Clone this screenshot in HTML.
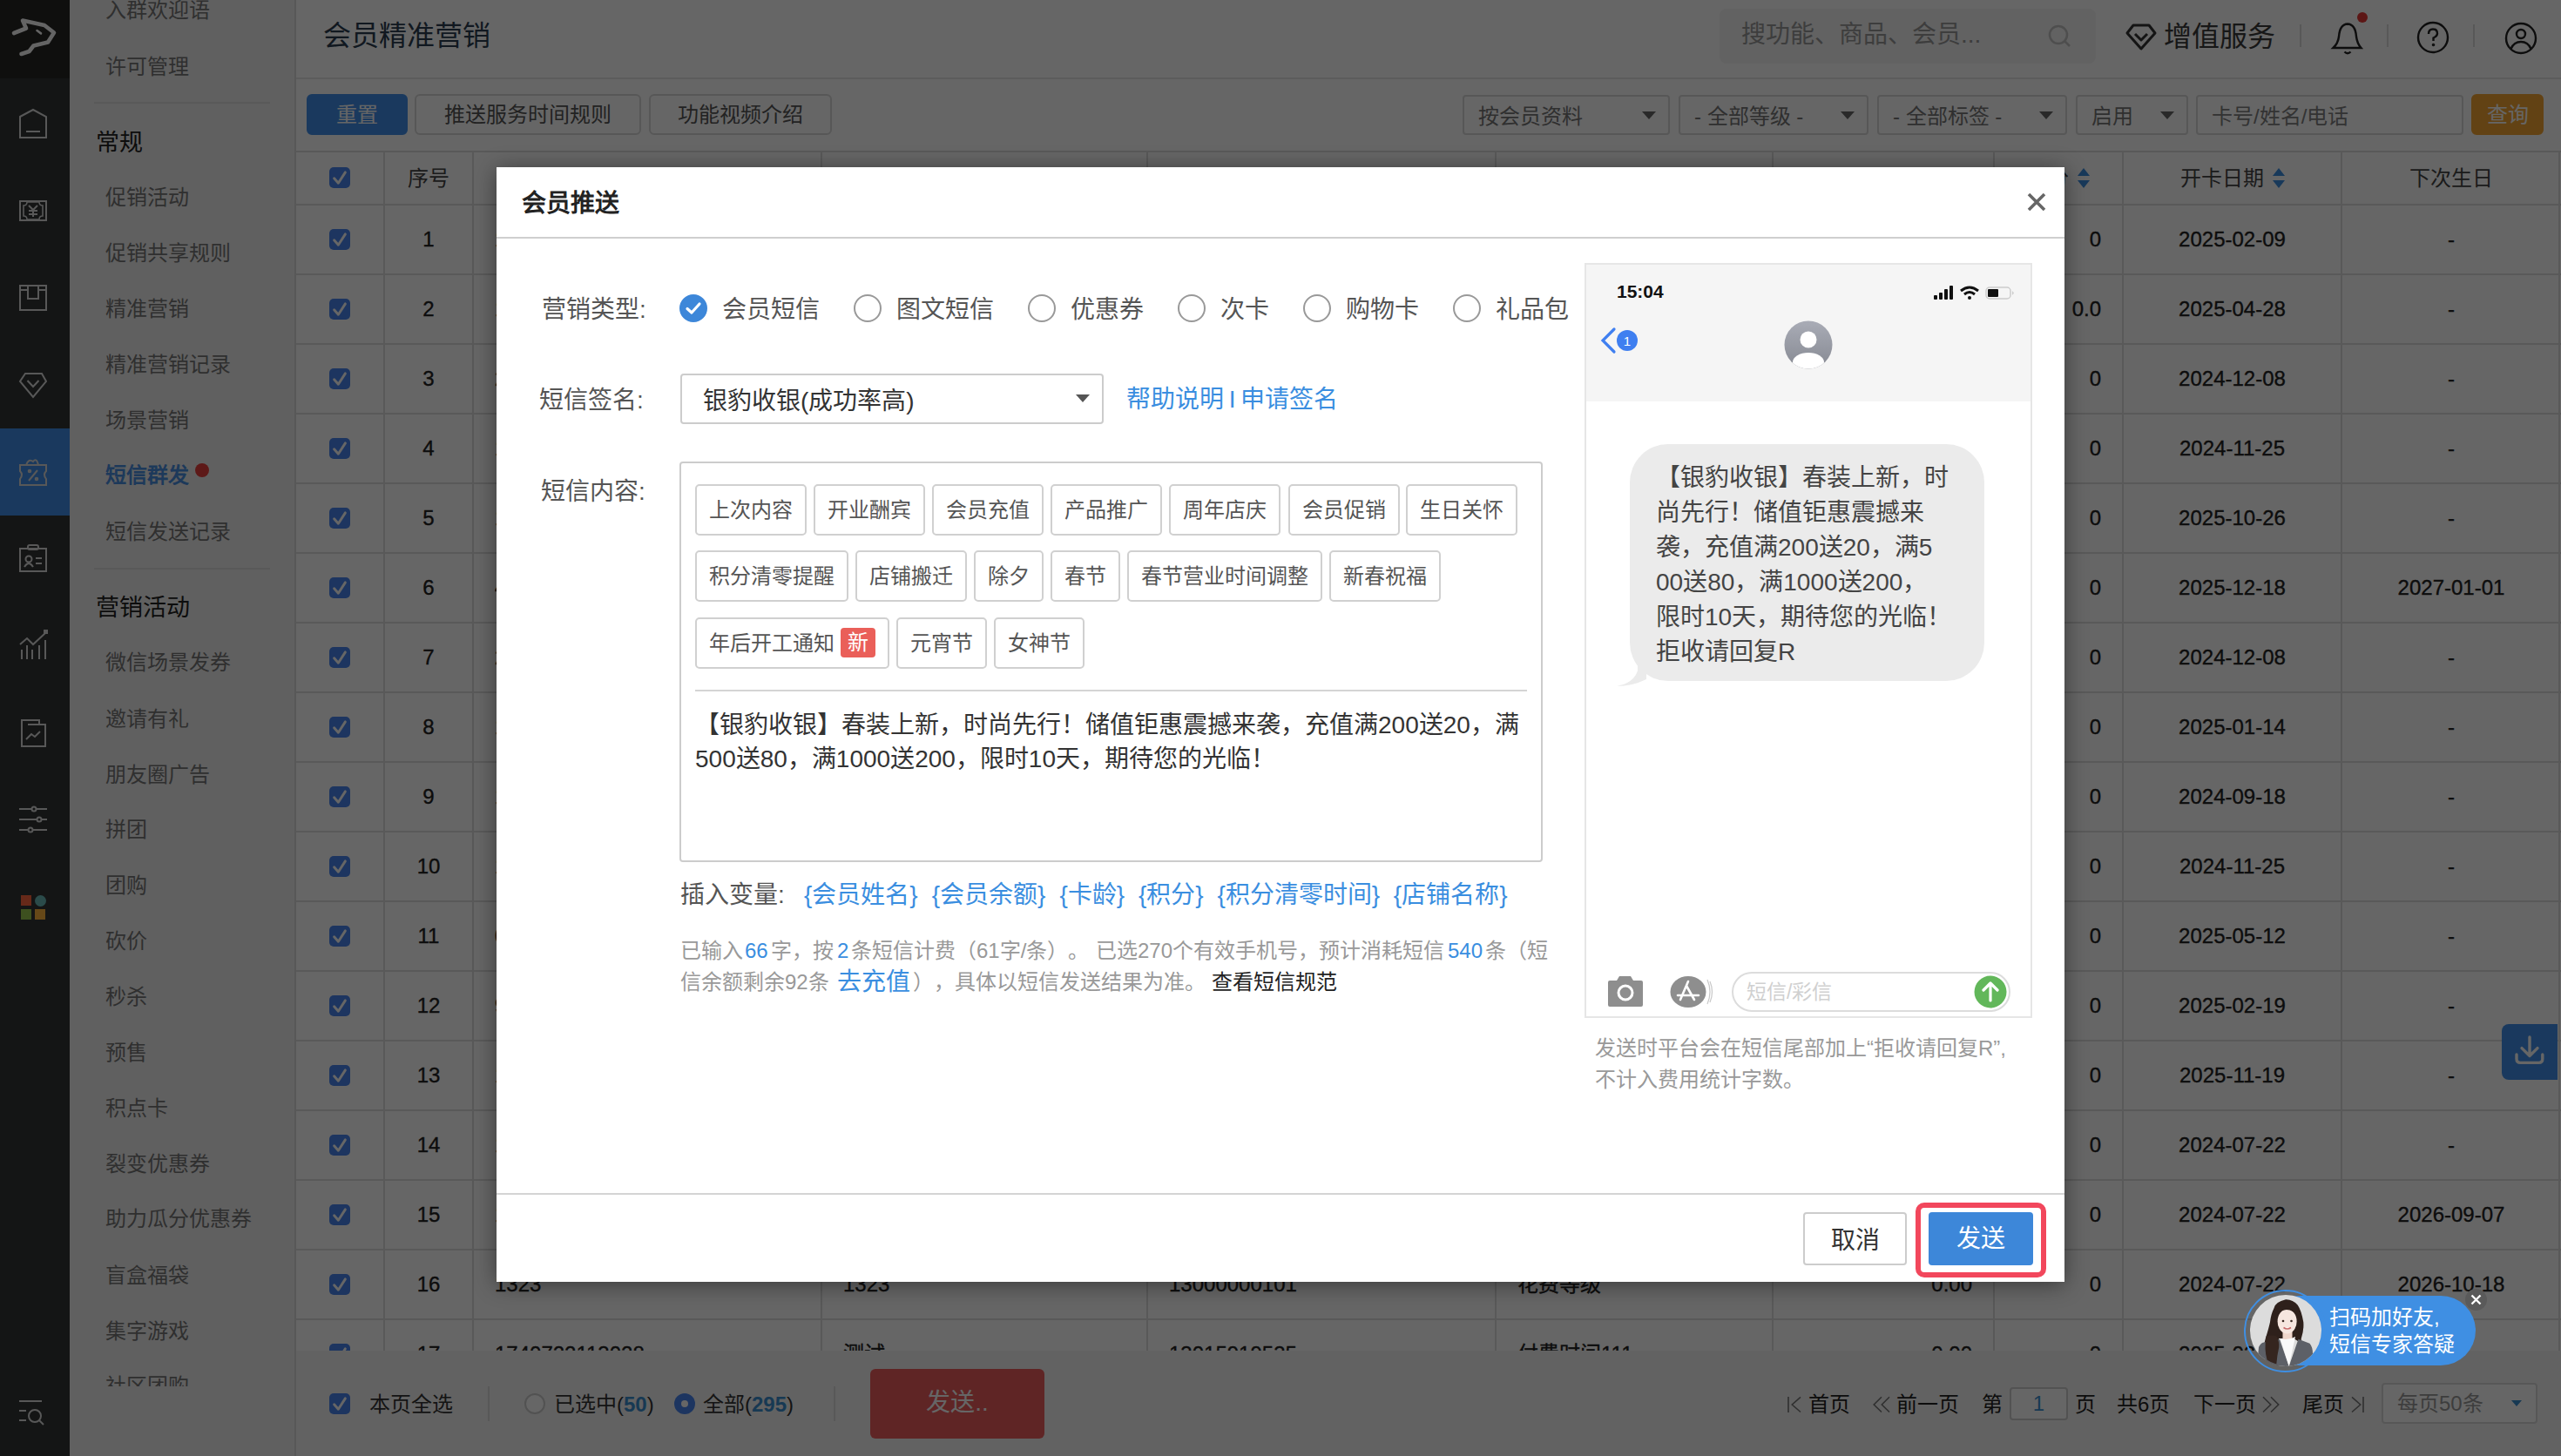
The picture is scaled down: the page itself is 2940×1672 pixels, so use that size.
<!DOCTYPE html>
<html lang="zh-CN"><head><meta charset="utf-8">
<style>
*{box-sizing:border-box;margin:0;padding:0}
html,body{width:2940px;height:1672px;overflow:hidden;background:#fff;font-family:"Liberation Sans",sans-serif;color:#333;text-spacing-trim:space-all}
.abs{position:absolute}
svg{position:absolute;overflow:visible}
#rail{left:0;top:0;width:80px;height:1672px;background:#323636}
#logo{left:0;top:0;width:80px;height:90px;background:#262624}
#menu{left:80px;top:0;width:260px;height:1672px;background:#f0f0f0;border-right:2px solid #dcdcdc;overflow:hidden}
.mi{transform:translateY(1.5px);position:absolute;left:41px;font-size:24px;line-height:30px;color:#777;white-space:nowrap}
.mh{transform:translateY(1.5px);position:absolute;left:30px;font-size:27px;line-height:32px;color:#222;white-space:nowrap}
.mdiv{position:absolute;left:28px;width:202px;height:2px;background:#dedede}
#hdr{left:340px;top:0;width:2600px;height:91px;background:#fff;border-bottom:2px solid #e6e6e6}
.btn{position:absolute;height:47px;border:2px solid #d9d9d9;border-radius:6px;font-size:24px;line-height:43px;text-align:center;color:#555;background:#fff;white-space:nowrap}
.sel{position:absolute;top:109px;height:46px;border:2px solid #d9d9d9;border-radius:4px;font-size:24px;line-height:45px;color:#777;padding-left:16px;background:#fff;white-space:nowrap}
.sel i{position:absolute;right:14px;top:17px;width:0;height:0;border-left:8px solid transparent;border-right:8px solid transparent;border-top:9px solid #666}
.hrow{position:absolute;left:340px;width:2600px;height:63px;background:#fff;border-bottom:2px solid #dedede;border-top:2px solid #dedede}
.rline{position:absolute;left:340px;width:2600px;height:2px;background:#dedede}
.vl{position:absolute;width:2px;height:1378px;background:#dedede}
.ct{position:absolute;height:80px;line-height:80px;font-size:24px;color:#222;white-space:nowrap;overflow:hidden;-webkit-text-stroke:0.35px #222}
.ch{position:absolute;height:62px;line-height:64px;font-size:24px;color:#444;white-space:nowrap;overflow:hidden}
.sort{display:inline-block;position:relative;width:14px;height:24px;margin-left:10px;vertical-align:-4px}
.sort b{position:absolute;left:0;top:0;border-left:7px solid transparent;border-right:7px solid transparent;border-bottom:9px solid #3d8ee0}
.sort i{position:absolute;left:0;top:14px;border-left:7px solid transparent;border-right:7px solid transparent;border-top:9px solid #3d8ee0}
.cb{position:absolute;width:24px;height:24px;border-radius:5px;background:#4a86f0}
.cb svg{left:0;top:0}
#foot{left:340px;top:1551px;width:2600px;height:121px;background:#f5f5f5}
#ov{left:0;top:0;width:2940px;height:1672px;background:rgba(0,0,0,0.6)}
#dlg{left:570px;top:192px;width:1800px;height:1280px;background:#fff;box-shadow:0 3px 24px rgba(0,0,0,0.45)}
.lbl{transform:translateY(2px);position:absolute;font-size:28px;line-height:34px;color:#555;white-space:nowrap}
.radio{position:absolute;top:338px;width:32px;height:32px;border-radius:50%;border:2px solid #999;background:#fff}
.rtxt{transform:translateY(2px);position:absolute;top:337px;font-size:28px;line-height:34px;color:#555;white-space:nowrap}
.tpl{position:absolute;height:59px;border:2px solid #d0d0d0;border-radius:5px;font-size:24px;line-height:55px;color:#555;white-space:nowrap;padding:0 13.5px;background:#fff}
.badge{display:inline-block;width:40px;height:34px;line-height:34px;text-align:center;border-radius:4px;background:#ea5f59;color:#fff;margin-left:7px;vertical-align:1px}
.blue{color:#3a8ee0}
.stat{transform:translateY(1.5px);position:absolute;font-size:24px;line-height:36px;color:#999;white-space:nowrap}
.stat.blue{color:#3a8ee0}
.stat.big{font-size:28px}
.stat.dark{color:#222}

</style></head><body>
<!-- left rail -->
<div id="rail" class="abs"></div>
<div id="logo" class="abs"></div>
<svg style="left:0;top:0" width="80" height="90" viewBox="0 0 80 90"><path d="M16 38 L30 32.5 L26 23.5 L51 29 L62 37.5 L55 48.5 L38.5 52.5 L33.5 59 L24.5 62" fill="none" stroke="#fafafa" stroke-width="4.6" stroke-linejoin="round" stroke-linecap="round"/><path d="M42.5 35 L47 38.4" stroke="#fafafa" stroke-width="2.6" stroke-linecap="round"/></svg>
<div class="abs" style="left:0;top:492px;width:80px;height:100px;background:#4190ea"></div>
<svg style="left:0;top:0" width="80" height="1672" viewBox="0 0 80 1672" fill="none" stroke="#dcdcdc" stroke-width="2">
  <!-- home -->
  <path d="M23 134 L38 126 L53 134 L53 158 L23 158 Z"/><path d="M30 151 L46 151"/>
  <!-- money -->
  <rect x="23" y="231" width="30" height="22"/><path d="M27 236 Q31 236 31 232 L45 232 Q45 236 49 236 L49 248 Q45 248 45 252 L31 252 Q31 248 27 248 Z" stroke-width="1.6"/><path d="M33 236 L38 241 L43 236 M38 241 L38 249 M33 242 L43 242 M33 246 L43 246"/>
  <!-- box -->
  <rect x="23" y="328" width="30" height="28"/><path d="M23 333 L32 333 M44 333 L53 333 M32 328 L32 343 L44 343 L44 328"/>
  <!-- diamond -->
  <path d="M29 429 L48 429 L53 438 L38 456 L23 438 Z"/><path d="M31.5 437 L38 444 L44.5 437"/>
  <!-- active ticket -->
  <path d="M23 534 L53 534 L53 541 Q49 545 53 550 L53 557 L23 557 L23 550 Q27 545 23 541 Z"/><path d="M30 534 Q33 526 38 530 Q42 525 44 534"/><path d="M33 552 L43 540"/><circle cx="34" cy="541" r="1.3"/><circle cx="42" cy="550" r="1.3"/>
  <!-- member card -->
  <rect x="23" y="630" width="30" height="26"/><rect x="32" y="626" width="12" height="5" rx="2"/><circle cx="33" cy="642" r="3.5"/><path d="M28 651 Q33 643 38 651 M41 641 L48 641 M41 647 L48 647"/>
  <!-- chart -->
  <path d="M23 740 L31 733 L38 740 L52 727"/><path d="M25 746 L25 757 M31 741 L31 757 M37 746 L37 757 M45 741 L45 757 M52 735 L52 757"/><rect x="51" y="724" width="3" height="3" fill="#dcdcdc"/>
  <!-- report -->
  <path d="M25 827 L45 827 L45 832 L52 832 L52 857 L25 857 Z M32 832 L45 832"/><path d="M30 849 L36 843 L40 846 L46 840"/>
  <!-- sliders -->
  <path d="M22 929 L54 929 M22 941 L54 941 M22 953 L54 953"/><circle cx="39" cy="929" r="2.5" fill="#323636"/><circle cx="45" cy="941" r="2.5" fill="#323636"/><circle cx="35" cy="953" r="2.5" fill="#323636"/>
  <!-- bottom search -->
  <path d="M22 1609 L48 1609 M22 1620 L30 1620 M22 1631 L30 1631"/><circle cx="40" cy="1626" r="7"/><path d="M45 1631 L50 1636"/>
</svg>
<div class="abs" style="left:24px;top:1028px;width:12px;height:12px;background:#ff6840"></div>
<div class="abs" style="left:40px;top:1028px;width:13px;height:13px;border-radius:50%;background:#6cbcb8"></div>
<div class="abs" style="left:24px;top:1044px;width:12px;height:12px;background:#98c84e"></div>
<div class="abs" style="left:40px;top:1044px;width:12px;height:12px;background:#ffb43c"></div>

<!-- menu -->
<div id="menu" class="abs">
  <div class="mi" style="top:-5px">入群欢迎语</div>
  <div class="mi" style="top:60px">许可管理</div>
  <div class="mdiv" style="top:117px"></div>
  <div class="mh" style="top:146px">常规</div>
  <div class="mi" style="top:210px">促销活动</div>
  <div class="mi" style="top:274px">促销共享规则</div>
  <div class="mi" style="top:338px">精准营销</div>
  <div class="mi" style="top:402px">精准营销记录</div>
  <div class="mi" style="top:466px">场景营销</div>
  <div class="mi" style="top:529px;color:#4a8fe0;font-weight:bold">短信群发</div>
  <div class="abs" style="left:144px;top:532px;width:16px;height:16px;border-radius:50%;background:#e8403c"></div>
  <div class="mi" style="top:594px">短信发送记录</div>
  <div class="mdiv" style="top:652px"></div>
  <div class="mh" style="top:680px">营销活动</div>
  <div class="mi" style="top:744px">微信场景发券</div>
  <div class="mi" style="top:809px">邀请有礼</div>
  <div class="mi" style="top:873px">朋友圈广告</div>
  <div class="mi" style="top:936px">拼团</div>
  <div class="mi" style="top:1000px">团购</div>
  <div class="mi" style="top:1064px">砍价</div>
  <div class="mi" style="top:1128px">秒杀</div>
  <div class="mi" style="top:1192px">预售</div>
  <div class="mi" style="top:1256px">积点卡</div>
  <div class="mi" style="top:1320px">裂变优惠券</div>
  <div class="mi" style="top:1383px">助力瓜分优惠券</div>
  <div class="mi" style="top:1448px">盲盒福袋</div>
  <div class="mi" style="top:1512px">集字游戏</div>
  <div class="mi" style="top:1575px">社区团购</div>
  <div style="position:absolute;left:0;top:1592px;width:258px;height:80px;background:#f0f0f0"></div>
</div>

<!-- header -->
<div id="hdr" class="abs">
  <div class="abs" style="left:31px;top:22px;font-size:32px;line-height:38px;color:#2c3e50">会员精准营销</div>
</div>
<div class="abs" style="left:1974px;top:10px;width:432px;height:63px;border-radius:8px;background:#f4f4f4"></div>
<div class="abs" style="transform:translateY(1px);left:1999px;top:22px;font-size:28px;line-height:34px;color:#9a9a9a;white-space:nowrap">搜功能、商品、会员...</div>
<svg style="left:2350px;top:26px" width="32" height="32" viewBox="0 0 32 32" fill="none" stroke="#c4c4c4" stroke-width="2.5"><circle cx="13" cy="14" r="10"/><path d="M20.5 21.5 L26 27"/></svg>
<svg style="left:2440px;top:26px" width="36" height="32" viewBox="0 0 36 32" fill="none" stroke="#333" stroke-width="3" stroke-linejoin="round"><path d="M9 3 L27 3 L34 12 L18 30 L2 12 Z"/><path d="M11 13 L18 20 L25 13"/></svg>
<div class="abs" style="left:2484px;top:23px;font-size:32px;line-height:38px;color:#3a3a3a;white-space:nowrap">增值服务</div>
<div class="abs" style="left:2640px;top:28px;width:2px;height:26px;background:#ddd"></div>
<div class="abs" style="left:2740px;top:28px;width:2px;height:26px;background:#ddd"></div>
<div class="abs" style="left:2839px;top:28px;width:2px;height:26px;background:#ddd"></div>
<svg style="left:2676px;top:22px" width="38" height="42" viewBox="0 0 38 42" fill="none" stroke="#222" stroke-width="2.4"><path d="M2.5 33 L34.5 33 Q30 28 29 20 Q28 6 19 5.5 Q10 6 9 20 Q8 28 2.5 33 Z"/><path d="M15.5 37.5 Q19 41 22.5 37.5"/></svg>
<div class="abs" style="left:2706px;top:14px;width:12px;height:12px;border-radius:50%;background:#e53935"></div>
<svg style="left:2774px;top:24px" width="38" height="38" viewBox="0 0 38 38" fill="none" stroke="#222" stroke-width="2.4"><circle cx="19" cy="19" r="17"/><path d="M14 15 Q14 9.5 19 9.5 Q24 9.5 24 14.5 Q24 17.5 19.5 19.5 L19.5 23"/><circle cx="19.5" cy="27.5" r="0.6" fill="#222"/></svg>
<svg style="left:2875px;top:25px" width="38" height="38" viewBox="0 0 38 38" fill="none" stroke="#222" stroke-width="2.4"><circle cx="19" cy="19" r="17"/><circle cx="19" cy="14" r="5"/><path d="M7.5 31 Q11 23 19 23 Q27 23 30.5 31"/></svg>

<!-- toolbar -->
<div class="btn" style="left:352px;top:108px;width:116px;background:#4190ea;border-color:#4190ea;color:#fff">重置</div>
<div class="btn" style="left:476px;top:108px;width:260px">推送服务时间规则</div>
<div class="btn" style="left:745px;top:108px;width:210px">功能视频介绍</div>
<div class="sel" style="left:1679px;width:238px">按会员资料<i></i></div>
<div class="sel" style="left:1927px;width:218px">- 全部等级 -<i></i></div>
<div class="sel" style="left:2155px;width:218px">- 全部标签 -<i></i></div>
<div class="sel" style="left:2383px;width:129px">启用<i></i></div>
<div class="sel" style="left:2521px;width:307px;color:#808080">卡号/姓名/电话</div>
<div class="btn" style="left:2837px;top:108px;width:83px;height:47px;background:#f6a532;border-color:#f6a532;color:#fff">查询</div>

<!-- table -->
<div class="hrow" style="top:173px"></div>
<div class="vl" style="left:440px;top:173px"></div>
<div class="vl" style="left:542px;top:173px"></div>
<div class="vl" style="left:942px;top:173px"></div>
<div class="vl" style="left:1316px;top:173px"></div>
<div class="vl" style="left:1716px;top:173px"></div>
<div class="vl" style="left:2034px;top:173px"></div>
<div class="vl" style="left:2288px;top:173px"></div>
<div class="vl" style="left:2436px;top:173px"></div>
<div class="vl" style="left:2687px;top:173px"></div>
<div class="cb" style="left:378px;top:192px"><svg width="24" height="24" viewBox="0 0 24 24"><path d="M5.6 12.8 L10.4 18.2 L18.4 5.9" fill="none" stroke="#fff" stroke-width="2.9" stroke-linecap="round" stroke-linejoin="round"/></svg></div>
<div class="ch" style="left:441px;width:102px;top:173px;text-align:center">序号</div>
<div class="ch" style="left:543px;width:400px;top:173px;text-align:center">卡号<span class="sort"><b></b><i></i></span></div>
<div class="ch" style="left:943px;width:374px;top:173px;text-align:center">姓名</div>
<div class="ch" style="left:1317px;width:400px;top:173px;text-align:center">手机号<span class="sort"><b></b><i></i></span></div>
<div class="ch" style="left:1717px;width:318px;top:173px;text-align:center">会员等级<span class="sort"><b></b><i></i></span></div>
<div class="ch" style="left:2035px;width:254px;top:173px;text-align:center">余额<span class="sort"><b></b><i></i></span></div>
<div class="ch" style="left:2289px;width:110px;top:173px;text-align:right">积分<span class="sort"><b></b><i></i></span></div>
<div class="ch" style="left:2437px;width:251px;top:173px;text-align:center">开卡日期<span class="sort"><b></b><i></i></span></div>
<div class="ch" style="left:2688px;width:252px;top:173px;text-align:center">下次生日</div>
<div class="rline" style="top:314px"></div>
<div class="cb" style="left:378px;top:263px"><svg width="24" height="24" viewBox="0 0 24 24"><path d="M5.6 12.8 L10.4 18.2 L18.4 5.9" fill="none" stroke="#fff" stroke-width="2.9" stroke-linecap="round" stroke-linejoin="round"/></svg></div>
<div class="ct" style="left:441px;width:102px;top:235px;text-align:center">1</div>
<div class="ct" style="left:568px;width:375px;top:235px;text-align:left">17407221130</div>
<div class="ct" style="left:968px;width:349px;top:235px;text-align:left">测试</div>
<div class="ct" style="left:1342px;width:375px;top:235px;text-align:left">13015919535</div>
<div class="ct" style="left:1742px;width:293px;top:235px;text-align:left">付费时间111</div>
<div class="ct" style="left:2035px;width:229px;top:235px;text-align:right">0.00</div>
<div class="ct" style="left:2289px;width:123px;top:235px;text-align:right">0</div>
<div class="ct" style="left:2437px;width:251px;top:235px;text-align:center">2025-02-09</div>
<div class="ct" style="left:2688px;width:252px;top:235px;text-align:center">-</div>
<div class="rline" style="top:394px"></div>
<div class="cb" style="left:378px;top:343px"><svg width="24" height="24" viewBox="0 0 24 24"><path d="M5.6 12.8 L10.4 18.2 L18.4 5.9" fill="none" stroke="#fff" stroke-width="2.9" stroke-linecap="round" stroke-linejoin="round"/></svg></div>
<div class="ct" style="left:441px;width:102px;top:315px;text-align:center">2</div>
<div class="ct" style="left:568px;width:375px;top:315px;text-align:left">1740722113</div>
<div class="ct" style="left:968px;width:349px;top:315px;text-align:left">测试</div>
<div class="ct" style="left:1342px;width:375px;top:315px;text-align:left">13015919535</div>
<div class="ct" style="left:1742px;width:293px;top:315px;text-align:left">付费时间111</div>
<div class="ct" style="left:2035px;width:229px;top:315px;text-align:right">0.00</div>
<div class="ct" style="left:2289px;width:123px;top:315px;text-align:right">0.0</div>
<div class="ct" style="left:2437px;width:251px;top:315px;text-align:center">2025-04-28</div>
<div class="ct" style="left:2688px;width:252px;top:315px;text-align:center">-</div>
<div class="rline" style="top:474px"></div>
<div class="cb" style="left:378px;top:423px"><svg width="24" height="24" viewBox="0 0 24 24"><path d="M5.6 12.8 L10.4 18.2 L18.4 5.9" fill="none" stroke="#fff" stroke-width="2.9" stroke-linecap="round" stroke-linejoin="round"/></svg></div>
<div class="ct" style="left:441px;width:102px;top:395px;text-align:center">3</div>
<div class="ct" style="left:568px;width:375px;top:395px;text-align:left">27407221130</div>
<div class="ct" style="left:968px;width:349px;top:395px;text-align:left">测试</div>
<div class="ct" style="left:1342px;width:375px;top:395px;text-align:left">13015919535</div>
<div class="ct" style="left:1742px;width:293px;top:395px;text-align:left">付费时间111</div>
<div class="ct" style="left:2035px;width:229px;top:395px;text-align:right">0.00</div>
<div class="ct" style="left:2289px;width:123px;top:395px;text-align:right">0</div>
<div class="ct" style="left:2437px;width:251px;top:395px;text-align:center">2024-12-08</div>
<div class="ct" style="left:2688px;width:252px;top:395px;text-align:center">-</div>
<div class="rline" style="top:554px"></div>
<div class="cb" style="left:378px;top:503px"><svg width="24" height="24" viewBox="0 0 24 24"><path d="M5.6 12.8 L10.4 18.2 L18.4 5.9" fill="none" stroke="#fff" stroke-width="2.9" stroke-linecap="round" stroke-linejoin="round"/></svg></div>
<div class="ct" style="left:441px;width:102px;top:475px;text-align:center">4</div>
<div class="ct" style="left:568px;width:375px;top:475px;text-align:left">17407221130</div>
<div class="ct" style="left:968px;width:349px;top:475px;text-align:left">测试</div>
<div class="ct" style="left:1342px;width:375px;top:475px;text-align:left">13015919535</div>
<div class="ct" style="left:1742px;width:293px;top:475px;text-align:left">付费时间111</div>
<div class="ct" style="left:2035px;width:229px;top:475px;text-align:right">0.00</div>
<div class="ct" style="left:2289px;width:123px;top:475px;text-align:right">0</div>
<div class="ct" style="left:2437px;width:251px;top:475px;text-align:center">2024-11-25</div>
<div class="ct" style="left:2688px;width:252px;top:475px;text-align:center">-</div>
<div class="rline" style="top:634px"></div>
<div class="cb" style="left:378px;top:583px"><svg width="24" height="24" viewBox="0 0 24 24"><path d="M5.6 12.8 L10.4 18.2 L18.4 5.9" fill="none" stroke="#fff" stroke-width="2.9" stroke-linecap="round" stroke-linejoin="round"/></svg></div>
<div class="ct" style="left:441px;width:102px;top:555px;text-align:center">5</div>
<div class="ct" style="left:568px;width:375px;top:555px;text-align:left">17407221130</div>
<div class="ct" style="left:968px;width:349px;top:555px;text-align:left">测试</div>
<div class="ct" style="left:1342px;width:375px;top:555px;text-align:left">13015919535</div>
<div class="ct" style="left:1742px;width:293px;top:555px;text-align:left">付费时间111</div>
<div class="ct" style="left:2035px;width:229px;top:555px;text-align:right">0.00</div>
<div class="ct" style="left:2289px;width:123px;top:555px;text-align:right">0</div>
<div class="ct" style="left:2437px;width:251px;top:555px;text-align:center">2025-10-26</div>
<div class="ct" style="left:2688px;width:252px;top:555px;text-align:center">-</div>
<div class="rline" style="top:714px"></div>
<div class="cb" style="left:378px;top:663px"><svg width="24" height="24" viewBox="0 0 24 24"><path d="M5.6 12.8 L10.4 18.2 L18.4 5.9" fill="none" stroke="#fff" stroke-width="2.9" stroke-linecap="round" stroke-linejoin="round"/></svg></div>
<div class="ct" style="left:441px;width:102px;top:635px;text-align:center">6</div>
<div class="ct" style="left:568px;width:375px;top:635px;text-align:left">47407221130</div>
<div class="ct" style="left:968px;width:349px;top:635px;text-align:left">测试</div>
<div class="ct" style="left:1342px;width:375px;top:635px;text-align:left">13015919535</div>
<div class="ct" style="left:1742px;width:293px;top:635px;text-align:left">付费时间111</div>
<div class="ct" style="left:2035px;width:229px;top:635px;text-align:right">0.00</div>
<div class="ct" style="left:2289px;width:123px;top:635px;text-align:right">0</div>
<div class="ct" style="left:2437px;width:251px;top:635px;text-align:center">2025-12-18</div>
<div class="ct" style="left:2688px;width:252px;top:635px;text-align:center">2027-01-01</div>
<div class="rline" style="top:794px"></div>
<div class="cb" style="left:378px;top:743px"><svg width="24" height="24" viewBox="0 0 24 24"><path d="M5.6 12.8 L10.4 18.2 L18.4 5.9" fill="none" stroke="#fff" stroke-width="2.9" stroke-linecap="round" stroke-linejoin="round"/></svg></div>
<div class="ct" style="left:441px;width:102px;top:715px;text-align:center">7</div>
<div class="ct" style="left:568px;width:375px;top:715px;text-align:left">27407221130</div>
<div class="ct" style="left:968px;width:349px;top:715px;text-align:left">测试</div>
<div class="ct" style="left:1342px;width:375px;top:715px;text-align:left">13015919535</div>
<div class="ct" style="left:1742px;width:293px;top:715px;text-align:left">付费时间111</div>
<div class="ct" style="left:2035px;width:229px;top:715px;text-align:right">0.00</div>
<div class="ct" style="left:2289px;width:123px;top:715px;text-align:right">0</div>
<div class="ct" style="left:2437px;width:251px;top:715px;text-align:center">2024-12-08</div>
<div class="ct" style="left:2688px;width:252px;top:715px;text-align:center">-</div>
<div class="rline" style="top:874px"></div>
<div class="cb" style="left:378px;top:823px"><svg width="24" height="24" viewBox="0 0 24 24"><path d="M5.6 12.8 L10.4 18.2 L18.4 5.9" fill="none" stroke="#fff" stroke-width="2.9" stroke-linecap="round" stroke-linejoin="round"/></svg></div>
<div class="ct" style="left:441px;width:102px;top:795px;text-align:center">8</div>
<div class="ct" style="left:568px;width:375px;top:795px;text-align:left">17407221130</div>
<div class="ct" style="left:968px;width:349px;top:795px;text-align:left">测试</div>
<div class="ct" style="left:1342px;width:375px;top:795px;text-align:left">13015919535</div>
<div class="ct" style="left:1742px;width:293px;top:795px;text-align:left">付费时间111</div>
<div class="ct" style="left:2035px;width:229px;top:795px;text-align:right">0.00</div>
<div class="ct" style="left:2289px;width:123px;top:795px;text-align:right">0</div>
<div class="ct" style="left:2437px;width:251px;top:795px;text-align:center">2025-01-14</div>
<div class="ct" style="left:2688px;width:252px;top:795px;text-align:center">-</div>
<div class="rline" style="top:954px"></div>
<div class="cb" style="left:378px;top:903px"><svg width="24" height="24" viewBox="0 0 24 24"><path d="M5.6 12.8 L10.4 18.2 L18.4 5.9" fill="none" stroke="#fff" stroke-width="2.9" stroke-linecap="round" stroke-linejoin="round"/></svg></div>
<div class="ct" style="left:441px;width:102px;top:875px;text-align:center">9</div>
<div class="ct" style="left:568px;width:375px;top:875px;text-align:left">17407221130</div>
<div class="ct" style="left:968px;width:349px;top:875px;text-align:left">测试</div>
<div class="ct" style="left:1342px;width:375px;top:875px;text-align:left">13015919535</div>
<div class="ct" style="left:1742px;width:293px;top:875px;text-align:left">付费时间111</div>
<div class="ct" style="left:2035px;width:229px;top:875px;text-align:right">0.00</div>
<div class="ct" style="left:2289px;width:123px;top:875px;text-align:right">0</div>
<div class="ct" style="left:2437px;width:251px;top:875px;text-align:center">2024-09-18</div>
<div class="ct" style="left:2688px;width:252px;top:875px;text-align:center">-</div>
<div class="rline" style="top:1034px"></div>
<div class="cb" style="left:378px;top:983px"><svg width="24" height="24" viewBox="0 0 24 24"><path d="M5.6 12.8 L10.4 18.2 L18.4 5.9" fill="none" stroke="#fff" stroke-width="2.9" stroke-linecap="round" stroke-linejoin="round"/></svg></div>
<div class="ct" style="left:441px;width:102px;top:955px;text-align:center">10</div>
<div class="ct" style="left:568px;width:375px;top:955px;text-align:left">17407221130</div>
<div class="ct" style="left:968px;width:349px;top:955px;text-align:left">测试</div>
<div class="ct" style="left:1342px;width:375px;top:955px;text-align:left">13015919535</div>
<div class="ct" style="left:1742px;width:293px;top:955px;text-align:left">付费时间111</div>
<div class="ct" style="left:2035px;width:229px;top:955px;text-align:right">0.00</div>
<div class="ct" style="left:2289px;width:123px;top:955px;text-align:right">0</div>
<div class="ct" style="left:2437px;width:251px;top:955px;text-align:center">2024-11-25</div>
<div class="ct" style="left:2688px;width:252px;top:955px;text-align:center">-</div>
<div class="rline" style="top:1114px"></div>
<div class="cb" style="left:378px;top:1063px"><svg width="24" height="24" viewBox="0 0 24 24"><path d="M5.6 12.8 L10.4 18.2 L18.4 5.9" fill="none" stroke="#fff" stroke-width="2.9" stroke-linecap="round" stroke-linejoin="round"/></svg></div>
<div class="ct" style="left:441px;width:102px;top:1035px;text-align:center">11</div>
<div class="ct" style="left:568px;width:375px;top:1035px;text-align:left">07407221130</div>
<div class="ct" style="left:968px;width:349px;top:1035px;text-align:left">测试</div>
<div class="ct" style="left:1342px;width:375px;top:1035px;text-align:left">13015919535</div>
<div class="ct" style="left:1742px;width:293px;top:1035px;text-align:left">付费时间111</div>
<div class="ct" style="left:2035px;width:229px;top:1035px;text-align:right">0.00</div>
<div class="ct" style="left:2289px;width:123px;top:1035px;text-align:right">0</div>
<div class="ct" style="left:2437px;width:251px;top:1035px;text-align:center">2025-05-12</div>
<div class="ct" style="left:2688px;width:252px;top:1035px;text-align:center">-</div>
<div class="rline" style="top:1194px"></div>
<div class="cb" style="left:378px;top:1143px"><svg width="24" height="24" viewBox="0 0 24 24"><path d="M5.6 12.8 L10.4 18.2 L18.4 5.9" fill="none" stroke="#fff" stroke-width="2.9" stroke-linecap="round" stroke-linejoin="round"/></svg></div>
<div class="ct" style="left:441px;width:102px;top:1115px;text-align:center">12</div>
<div class="ct" style="left:568px;width:375px;top:1115px;text-align:left">97407221130</div>
<div class="ct" style="left:968px;width:349px;top:1115px;text-align:left">测试</div>
<div class="ct" style="left:1342px;width:375px;top:1115px;text-align:left">13015919535</div>
<div class="ct" style="left:1742px;width:293px;top:1115px;text-align:left">付费时间111</div>
<div class="ct" style="left:2035px;width:229px;top:1115px;text-align:right">0.00</div>
<div class="ct" style="left:2289px;width:123px;top:1115px;text-align:right">0</div>
<div class="ct" style="left:2437px;width:251px;top:1115px;text-align:center">2025-02-19</div>
<div class="ct" style="left:2688px;width:252px;top:1115px;text-align:center">-</div>
<div class="rline" style="top:1274px"></div>
<div class="cb" style="left:378px;top:1223px"><svg width="24" height="24" viewBox="0 0 24 24"><path d="M5.6 12.8 L10.4 18.2 L18.4 5.9" fill="none" stroke="#fff" stroke-width="2.9" stroke-linecap="round" stroke-linejoin="round"/></svg></div>
<div class="ct" style="left:441px;width:102px;top:1195px;text-align:center">13</div>
<div class="ct" style="left:568px;width:375px;top:1195px;text-align:left">17407221130</div>
<div class="ct" style="left:968px;width:349px;top:1195px;text-align:left">测试</div>
<div class="ct" style="left:1342px;width:375px;top:1195px;text-align:left">13015919535</div>
<div class="ct" style="left:1742px;width:293px;top:1195px;text-align:left">付费时间111</div>
<div class="ct" style="left:2035px;width:229px;top:1195px;text-align:right">0.00</div>
<div class="ct" style="left:2289px;width:123px;top:1195px;text-align:right">0</div>
<div class="ct" style="left:2437px;width:251px;top:1195px;text-align:center">2025-11-19</div>
<div class="ct" style="left:2688px;width:252px;top:1195px;text-align:center">-</div>
<div class="rline" style="top:1354px"></div>
<div class="cb" style="left:378px;top:1303px"><svg width="24" height="24" viewBox="0 0 24 24"><path d="M5.6 12.8 L10.4 18.2 L18.4 5.9" fill="none" stroke="#fff" stroke-width="2.9" stroke-linecap="round" stroke-linejoin="round"/></svg></div>
<div class="ct" style="left:441px;width:102px;top:1275px;text-align:center">14</div>
<div class="ct" style="left:568px;width:375px;top:1275px;text-align:left">17407221130</div>
<div class="ct" style="left:968px;width:349px;top:1275px;text-align:left">测试</div>
<div class="ct" style="left:1342px;width:375px;top:1275px;text-align:left">13015919535</div>
<div class="ct" style="left:1742px;width:293px;top:1275px;text-align:left">付费时间111</div>
<div class="ct" style="left:2035px;width:229px;top:1275px;text-align:right">0.00</div>
<div class="ct" style="left:2289px;width:123px;top:1275px;text-align:right">0</div>
<div class="ct" style="left:2437px;width:251px;top:1275px;text-align:center">2024-07-22</div>
<div class="ct" style="left:2688px;width:252px;top:1275px;text-align:center">-</div>
<div class="rline" style="top:1434px"></div>
<div class="cb" style="left:378px;top:1383px"><svg width="24" height="24" viewBox="0 0 24 24"><path d="M5.6 12.8 L10.4 18.2 L18.4 5.9" fill="none" stroke="#fff" stroke-width="2.9" stroke-linecap="round" stroke-linejoin="round"/></svg></div>
<div class="ct" style="left:441px;width:102px;top:1355px;text-align:center">15</div>
<div class="ct" style="left:568px;width:375px;top:1355px;text-align:left">17407221130</div>
<div class="ct" style="left:968px;width:349px;top:1355px;text-align:left">测试</div>
<div class="ct" style="left:1342px;width:375px;top:1355px;text-align:left">13015919535</div>
<div class="ct" style="left:1742px;width:293px;top:1355px;text-align:left">付费时间111</div>
<div class="ct" style="left:2035px;width:229px;top:1355px;text-align:right">0.00</div>
<div class="ct" style="left:2289px;width:123px;top:1355px;text-align:right">0</div>
<div class="ct" style="left:2437px;width:251px;top:1355px;text-align:center">2024-07-22</div>
<div class="ct" style="left:2688px;width:252px;top:1355px;text-align:center">2026-09-07</div>
<div class="rline" style="top:1514px"></div>
<div class="cb" style="left:378px;top:1463px"><svg width="24" height="24" viewBox="0 0 24 24"><path d="M5.6 12.8 L10.4 18.2 L18.4 5.9" fill="none" stroke="#fff" stroke-width="2.9" stroke-linecap="round" stroke-linejoin="round"/></svg></div>
<div class="ct" style="left:441px;width:102px;top:1435px;text-align:center">16</div>
<div class="ct" style="left:568px;width:375px;top:1435px;text-align:left">1323</div>
<div class="ct" style="left:968px;width:349px;top:1435px;text-align:left">1323</div>
<div class="ct" style="left:1342px;width:375px;top:1435px;text-align:left">13000000101</div>
<div class="ct" style="left:1742px;width:293px;top:1435px;text-align:left">花费等级</div>
<div class="ct" style="left:2035px;width:229px;top:1435px;text-align:right">0.00</div>
<div class="ct" style="left:2289px;width:123px;top:1435px;text-align:right">0</div>
<div class="ct" style="left:2437px;width:251px;top:1435px;text-align:center">2024-07-22</div>
<div class="ct" style="left:2688px;width:252px;top:1435px;text-align:center">2026-10-18</div>
<div class="rline" style="top:1594px"></div>
<div class="cb" style="left:378px;top:1543px"><svg width="24" height="24" viewBox="0 0 24 24"><path d="M5.6 12.8 L10.4 18.2 L18.4 5.9" fill="none" stroke="#fff" stroke-width="2.9" stroke-linecap="round" stroke-linejoin="round"/></svg></div>
<div class="ct" style="left:441px;width:102px;top:1515px;text-align:center">17</div>
<div class="ct" style="left:568px;width:375px;top:1515px;text-align:left">1740722113028</div>
<div class="ct" style="left:968px;width:349px;top:1515px;text-align:left">测试</div>
<div class="ct" style="left:1342px;width:375px;top:1515px;text-align:left">13015919535</div>
<div class="ct" style="left:1742px;width:293px;top:1515px;text-align:left">付费时间111</div>
<div class="ct" style="left:2035px;width:229px;top:1515px;text-align:right">0.00</div>
<div class="ct" style="left:2289px;width:123px;top:1515px;text-align:right">0</div>
<div class="ct" style="left:2437px;width:251px;top:1515px;text-align:center">2025-02-19</div>
<div class="ct" style="left:2688px;width:252px;top:1515px;text-align:center">-</div>

<!-- footer -->
<div id="foot" class="abs"></div>
<div class="cb" style="left:378px;top:1600px"><svg width="24" height="24" viewBox="0 0 24 24"><path d="M5.6 12.8 L10.4 18.2 L18.4 5.9" fill="none" stroke="#fff" stroke-width="2.9" stroke-linecap="round" stroke-linejoin="round"/></svg></div>
<div class="abs" style="transform:translateY(2px);left:424px;top:1594px;font-size:24px;line-height:34px;color:#333">本页全选</div>
<div class="abs" style="left:560px;top:1592px;width:2px;height:40px;background:#ddd"></div>
<div class="abs" style="left:602px;top:1600px;width:24px;height:24px;border-radius:50%;border:2px solid #ccc;background:#fff"></div>
<div class="abs" style="transform:translateY(2px);left:636px;top:1594px;font-size:24px;line-height:34px;color:#333;white-space:nowrap">已选中(<b style="color:#3b8ed0">50</b>)</div>
<div class="abs" style="left:774px;top:1600px;width:24px;height:24px;border-radius:50%;background:#4a86f0"><div style="position:absolute;left:8px;top:8px;width:8px;height:8px;border-radius:50%;background:#fff"></div></div>
<div class="abs" style="transform:translateY(2px);left:807px;top:1594px;font-size:24px;line-height:34px;color:#333;white-space:nowrap">全部(<b style="color:#3b8ed0">295</b>)</div>
<div class="abs" style="left:957px;top:1592px;width:2px;height:40px;background:#ddd"></div>
<div class="abs" style="left:999px;top:1572px;width:200px;height:80px;border-radius:6px;background:#ed5e5e;color:#fff;font-size:28px;line-height:78px;text-align:center">发送..</div>
<div class="abs" style="transform:translateY(1.5px);left:2040px;top:1594px;font-size:24px;line-height:34px;color:#222;white-space:nowrap">
<span style="position:absolute;left:36px">首页</span>
<span style="position:absolute;left:137px">前一页</span>
<span style="position:absolute;left:235px">第</span>
<span style="position:absolute;left:342px">页</span>
<span style="position:absolute;left:390px">共6页</span>
<span style="position:absolute;left:478px">下一页</span>
<span style="position:absolute;left:603px">尾页</span>
</div>
<svg style="left:2050px;top:1602px" width="670" height="22" viewBox="0 0 670 22" fill="none" stroke="#777" stroke-width="1.6">
<path d="M3 2 L3 20 M17 2.3 L7.3 11 L17 19.5"/>
<path d="M110 2.3 L101.2 11 L110 19.5 M119 2.3 L110.3 11 L119 19.5"/>
<path d="M548 2.3 L556.8 11 L548 19.5 M557 2.3 L565.7 11 L557 19.5"/>
<path d="M650 2.3 L659.7 11 L650 19.5 M663 2 L663 20"/>
</svg>
<div class="abs" style="left:2307px;top:1593px;width:67px;height:38px;border:2px solid #ccc;border-radius:4px;background:#fff;font-size:24px;line-height:34px;text-align:center;color:#3b8ed0">1</div>
<div class="sel" style="left:2734px;top:1588px;width:179px;height:47px;line-height:43px;color:#999">每页50条<i style="border-top-color:#3b8ed0;border-left-width:6px;border-right-width:6px;border-top-width:7px;right:16px;top:18px"></i></div>
<div class="abs" style="left:2872px;top:1176px;width:64px;height:64px;border-top-left-radius:8px;border-bottom-left-radius:8px;background:#4190ea"></div>
<div class="abs" style="left:2937px;top:173px;width:2px;height:1378px;background:#dedede"></div>
<svg style="left:2872px;top:1176px" width="64" height="64" viewBox="0 0 64 64" fill="none" stroke="#fff" stroke-width="3.4" stroke-linecap="round" stroke-linejoin="round"><path d="M32 15 L32 36.5 M23 27.6 L32 36.5 L41 27.6"/><path d="M17 35 L17 40 Q17 44.4 21.4 44.4 L42.4 44.4 Q46.8 44.4 46.8 40 L46.8 35"/></svg>

<!-- overlay -->
<div id="ov" class="abs"></div>

<!-- dialog -->
<div id="dlg" class="abs"></div>
<div class="abs" style="transform:translateY(2px);left:599px;top:215px;font-size:28px;line-height:34px;font-weight:bold;color:#222;white-space:nowrap">会员推送</div>
<svg style="left:2327px;top:221px" width="22" height="22" viewBox="0 0 22 22" stroke="#666" stroke-width="3.6"><path d="M2 2 L20 20 M20 2 L2 20"/></svg>
<div class="abs" style="left:570px;top:272px;width:1800px;height:2px;background:#cfcfcf"></div>

<!-- labels -->
<div class="lbl" style="left:622px;top:337px">营销类型:</div>
<div class="lbl" style="left:619px;top:441px">短信签名:</div>
<div class="lbl" style="left:621px;top:546px">短信内容:</div>

<!-- radios -->
<div class="radio" style="left:780px;background:#3d87d9;border-color:#3d87d9"></div>
<svg style="left:780px;top:338px" width="32" height="32" viewBox="0 0 32 32" fill="none" stroke="#fff" stroke-width="3.2" stroke-linecap="round" stroke-linejoin="round"><path d="M9 16.5 L14 21 L23 11"/></svg>
<div class="rtxt" style="left:829px">会员短信</div>
<div class="radio" style="left:980px"></div>
<div class="rtxt" style="left:1029px">图文短信</div>
<div class="radio" style="left:1180px"></div>
<div class="rtxt" style="left:1229px">优惠券</div>
<div class="radio" style="left:1352px"></div>
<div class="rtxt" style="left:1401px">次卡</div>
<div class="radio" style="left:1496px"></div>
<div class="rtxt" style="left:1545px">购物卡</div>
<div class="radio" style="left:1668px"></div>
<div class="rtxt" style="left:1717px">礼品包</div>

<!-- signature select -->
<div class="abs" style="left:781px;top:429px;width:486px;height:58px;border:2px solid #ccc;border-radius:4px;background:#fff"></div>
<div class="abs" style="transform:translateY(2.5px);left:807px;top:441px;font-size:28px;line-height:34px;color:#333;white-space:nowrap">银豹收银(成功率高)</div>
<div class="abs" style="left:1235px;top:453px;width:0;height:0;border-left:8px solid transparent;border-right:8px solid transparent;border-top:9px solid #555"></div>
<div class="abs blue" style="transform:translateY(1px);left:1293px;top:441px;font-size:28px;line-height:34px;white-space:nowrap;word-spacing:-2px">帮助说明 I 申请签名</div>

<!-- content box -->
<div class="abs" style="left:780px;top:530px;width:991px;height:460px;border:2px solid #ccc;border-radius:4px;background:#fff"></div>
<div class="tpl" style="left:798px;top:556px;width:128px">上次内容</div>
<div class="tpl" style="left:934px;top:556px;width:128px">开业酬宾</div>
<div class="tpl" style="left:1070px;top:556px;width:128px">会员充值</div>
<div class="tpl" style="left:1206px;top:556px;width:128px">产品推广</div>
<div class="tpl" style="left:1342px;top:556px;width:128px">周年店庆</div>
<div class="tpl" style="left:1479px;top:556px;width:128px">会员促销</div>
<div class="tpl" style="left:1614px;top:556px;width:128px">生日关怀</div>
<div class="tpl" style="left:798px;top:632px;width:176px">积分清零提醒</div>
<div class="tpl" style="left:982px;top:632px;width:128px">店铺搬迁</div>
<div class="tpl" style="left:1118px;top:632px;width:80px">除夕</div>
<div class="tpl" style="left:1206px;top:632px;width:80px">春节</div>
<div class="tpl" style="left:1294px;top:632px;width:224px">春节营业时间调整</div>
<div class="tpl" style="left:1526px;top:632px;width:128px">新春祝福</div>
<div class="tpl" style="left:798px;top:709px;width:223px">年后开工通知<span class="badge">新</span></div>
<div class="tpl" style="left:1029px;top:709px;width:104px">元宵节</div>
<div class="tpl" style="left:1141px;top:709px;width:104px">女神节</div>
<div class="abs" style="left:798px;top:792px;width:955px;height:2px;background:#d4d4d4"></div>
<div class="abs" style="transform:translateY(2.5px);left:798px;top:810px;width:960px;font-size:28px;line-height:39px;color:#333">【银豹收银】春装上新，时尚先行！储值钜惠震撼来袭，充值满200送20，满500送80，满1000送200，限时10天，期待您的光临！</div>

<!-- variables -->
<div class="abs" style="transform:translateY(2.5px);left:781px;top:1008px;font-size:28px;line-height:34px;color:#555;white-space:nowrap">插入变量:</div>
<div class="abs blue" style="left:922.9px;top:1010.5px;font-size:28px;line-height:34px;white-space:nowrap">{会员姓名}</div>
<div class="abs blue" style="left:1069.7px;top:1010.5px;font-size:28px;line-height:34px;white-space:nowrap">{会员余额}</div>
<div class="abs blue" style="left:1216.5px;top:1010.5px;font-size:28px;line-height:34px;white-space:nowrap">{卡龄}</div>
<div class="abs blue" style="left:1307px;top:1010.5px;font-size:28px;line-height:34px;white-space:nowrap">{积分}</div>
<div class="abs blue" style="left:1397.5px;top:1010.5px;font-size:28px;line-height:34px;white-space:nowrap">{积分清零时间}</div>
<div class="abs blue" style="left:1599.8px;top:1010.5px;font-size:28px;line-height:34px;white-space:nowrap">{店铺名称}</div>

<!-- stats -->
<div class="stat " style="left:781px;top:1072px">已输入</div>
<div class="stat blue" style="left:855px;top:1072px">66</div>
<div class="stat " style="left:885px;top:1072px">字，按</div>
<div class="stat blue" style="left:961px;top:1072px">2</div>
<div class="stat " style="left:977px;top:1072px">条短信计费（61字/条）。</div>
<div class="stat " style="left:1258px;top:1072px">已选270个有效手机号，预计消耗短信</div>
<div class="stat blue" style="left:1662px;top:1072px">540</div>
<div class="stat " style="left:1705px;top:1072px">条（短</div>
<div class="stat " style="left:781px;top:1108px">信余额剩余92条</div>
<div class="stat blue big" style="left:961px;top:1108px">去充值</div>
<div class="stat " style="left:1048px;top:1108px">），具体以短信发送结果为准。</div>
<div class="stat dark" style="left:1391px;top:1108px">查看短信规范</div>

<!-- phone -->
<div class="abs" style="left:1819px;top:302px;width:514px;height:867px;border:2px solid #e6e6e6;background:#fff"></div>
<div class="abs" style="left:1821px;top:304px;width:510px;height:157px;background:#f5f5f5"></div>
<div class="abs" style="left:1856px;top:322px;font-size:21px;line-height:26px;font-weight:bold;color:#111">15:04</div>
<svg style="left:2219px;top:327px" width="94" height="18" viewBox="0 0 94 18">
  <rect x="1" y="12" width="4" height="5" rx="1" fill="#111"/><rect x="7" y="9" width="4" height="8" rx="1" fill="#111"/><rect x="13" y="5" width="4" height="12" rx="1" fill="#111"/><rect x="19" y="1" width="4" height="16" rx="1" fill="#111"/>
  <path d="M32 7 Q42 -1 52 7" fill="none" stroke="#111" stroke-width="3"/><path d="M36 11 Q42 6 48 11" fill="none" stroke="#111" stroke-width="3"/><circle cx="42" cy="15" r="2" fill="#111"/>
  <rect x="61" y="3" width="28" height="13" rx="4" fill="none" stroke="#ccc" stroke-width="1.5"/><rect x="63" y="5" width="12" height="9" rx="1" fill="#111"/><path d="M91 7 L93 9.5 L91 12" fill="#ccc"/>
</svg>
<svg style="left:1836px;top:376px" width="50" height="30" viewBox="0 0 50 30"><path d="M17 2 L4 15 L17 28" fill="none" stroke="#3f7ff0" stroke-width="3.2" stroke-linecap="round"/><circle cx="32" cy="15" r="12" fill="#3f7ff0"/><text x="32" y="21" font-size="15" fill="#fff" text-anchor="middle" font-family="Liberation Sans">1</text></svg>
<svg style="left:2048px;top:368px" width="56" height="56" viewBox="0 0 56 56"><defs><linearGradient id="av" x1="0" y1="0" x2="0" y2="1"><stop offset="0" stop-color="#a9acb6"/><stop offset="1" stop-color="#868992"/></linearGradient><clipPath id="avc"><circle cx="28" cy="28" r="27.5"/></clipPath></defs><circle cx="28" cy="28" r="27.5" fill="url(#av)"/><g clip-path="url(#avc)"><circle cx="28" cy="22" r="9.5" fill="#fff"/><ellipse cx="28" cy="48" rx="18" ry="11" fill="#fff"/></g></svg>

<div class="abs" style="left:1871px;top:510px;width:407px;height:272px;border-radius:44px;background:#ebebeb"></div>
<svg style="left:1850px;top:740px" width="60" height="50" viewBox="0 0 60 50"><path d="M30 0 L30 30 Q26 44 6 48 Q24 48 40 40 L40 0 Z" fill="#ebebeb"/></svg>
<div class="abs" style="left:1901px;top:529px;font-size:28px;line-height:40px;color:#444;white-space:nowrap">【银豹收银】春装上新，时<br>尚先行！储值钜惠震撼来<br>袭，充值满200送20，满5<br>00送80，满1000送200，<br>限时10天，期待您的光临！<br>拒收请回复R</div>

<svg style="left:1843px;top:1120px" width="46" height="38" viewBox="0 0 46 38"><path d="M3 8 Q3 6 5 6 L13 6 L16 1 L29 1 L32 6 L41 6 Q43 6 43 8 L43 34 Q43 36 41 36 L5 36 Q3 36 3 34 Z" fill="#8e8e8e"/><circle cx="23" cy="20" r="8" fill="none" stroke="#fff" stroke-width="3"/></svg>
<svg style="left:1915px;top:1115px" width="56" height="48" viewBox="0 0 56 48"><ellipse cx="23" cy="24" rx="20.5" ry="18" fill="#8e8e8e"/><path d="M45 10 Q51 24 45 38 M48 12 Q53 24 48 36" fill="none" stroke="#c8c8c8" stroke-width="1.2"/><path d="M23 12 L14 33 M21 17 L30 33 M11 28 L35 28" stroke="#fff" stroke-width="2.6" stroke-linecap="round"/></svg>
<div class="abs" style="left:1988px;top:1116px;width:320px;height:46px;border:2px solid #dcdcdc;border-radius:23px;background:#fff"></div>
<div class="abs" style="left:2005px;top:1125px;font-size:23px;line-height:28px;color:#d0d0d0;white-space:nowrap">短信/彩信</div>
<svg style="left:2266px;top:1120px" width="38" height="38" viewBox="0 0 38 38"><circle cx="19" cy="19" r="18.5" fill="#62b75a"/><path d="M19 29 L19 10 M11 17 L19 9 L27 17" fill="none" stroke="#fff" stroke-width="3.2" stroke-linecap="round" stroke-linejoin="round"/></svg>

<div class="abs" style="transform:translateY(1px);left:1831px;top:1185px;width:510px;font-size:24px;line-height:36px;color:#999">发送时平台会在短信尾部加上“拒收请回复R”,<br>不计入费用统计字数。</div>

<!-- footer -->
<div class="abs" style="left:570px;top:1370px;width:1800px;height:2px;background:#d4d4d4"></div>
<div class="abs" style="transform:translateY(0px);left:2070px;top:1392px;width:119px;height:61px;border:2px solid #ccc;border-radius:4px;background:#fff;font-size:28px;line-height:62px;text-align:center;color:#333">取消</div>
<div class="abs" style="left:2199px;top:1381px;width:150px;height:86px;border:6px solid #f2475c;border-radius:10px"></div>
<div class="abs" style="left:2214px;top:1392px;width:120px;height:61px;border-radius:4px;background:#3d87d9;font-size:28px;line-height:61px;text-align:center;color:#fff">发送</div>


<!-- helper -->
<div class="abs" style="left:2600px;top:1488px;width:242px;height:80px;border-radius:40px;background:#3f8fe3"></div>
<div class="abs" style="left:2576px;top:1481px;width:95px;height:95px;border-radius:50%;border:2px solid #3f8fe3;background:transparent"></div>
<svg style="left:2583px;top:1487px" width="82" height="82" viewBox="0 0 82 82"><defs><clipPath id="hc"><circle cx="41" cy="41" r="41"/></clipPath></defs><circle cx="41" cy="41" r="41" fill="#dcdcdc"/><g clip-path="url(#hc)">
<path d="M41 5.3 Q29 8 27.4 15.4 Q24 22 23 31.3 Q21 40 18 49.3 Q15 58 15.9 67.4 Q17 75 19.5 82 L33 82 L33 50 L50 50 L60.6 56.5 Q58 52 59 49.3 Q62 40 61.3 31.3 Q59 18 54.8 11.8 Q49 5 41 5.3 Z" fill="#2e201b"/>
<rect x="37.5" y="40" width="11" height="12" fill="#efd6cb"/>
<ellipse cx="42.6" cy="30.5" rx="11" ry="14" fill="#f6e6df"/>
<path d="M26 24 Q30 12 42 13 Q54 13 56 26 Q50 17 42 17 Q31 18 26 24 Z" fill="#2e201b"/>
<path d="M8 82 L10 60 Q12 55 16 54.4 L34 51 L44.7 82 Z" fill="#5d6067"/>
<path d="M44.7 82 L55.5 50.8 L68.5 55.8 Q72 60 72 67.4 L74 82 Z" fill="#5d6067"/>
<path d="M34.6 50 L44.7 82 L52 47.9 Q43 53 34.6 50 Z" fill="#fafafa"/>
<path d="M18.7 47.2 Q25 46 30.3 47.2 Q34 54 33.2 60.2 Q31 70 30.3 79.6 Q24 78 19.5 74.6 Q16 62 18.7 47.2 Z" fill="#35251f"/>
<circle cx="38" cy="30" r="1.3" fill="#3a2a24"/><circle cx="47.5" cy="30" r="1.3" fill="#3a2a24"/><path d="M38.5 37.5 Q42.7 40.5 47 37.5" stroke="#c86a6a" stroke-width="1.6" fill="#fff"/>
</g></svg>
<div class="abs" style="left:2674px;top:1497px;font-size:24px;line-height:31px;color:#fff;white-space:nowrap">扫码加好友,<br>短信专家答疑</div>
<div class="abs" style="left:2830px;top:1480px;width:25px;height:25px;border-radius:50%;background:#5a5a5a"></div>
<svg style="left:2836px;top:1486px" width="13" height="13" viewBox="0 0 13 13" stroke="#fff" stroke-width="2.4"><path d="M1.5 1.5 L11.5 11.5 M11.5 1.5 L1.5 11.5"/></svg>


</body></html>
